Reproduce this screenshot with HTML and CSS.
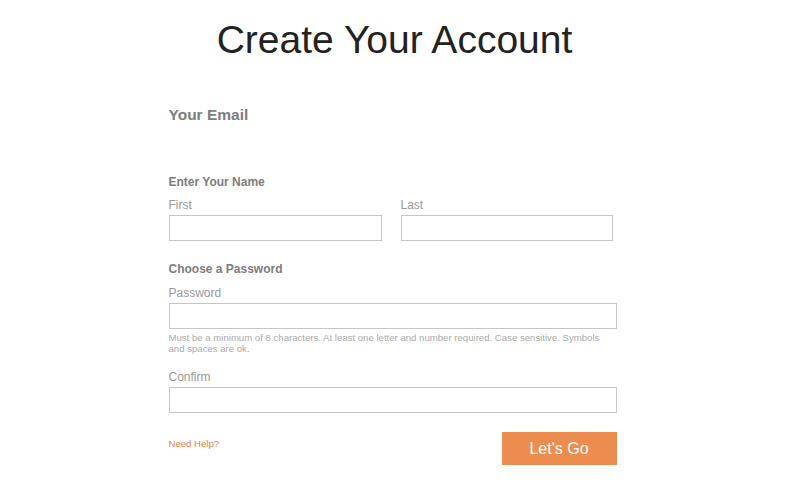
FILE: index.html
```html
<!DOCTYPE html>
<html lang="en">
<head>
  <meta charset="UTF-8" />
  <meta name="viewport" content="width=device-width, initial-scale=1.0" />
  <title>Create Your Account</title>
  <link rel="stylesheet" href="styles.css">
</head>
<body>

  <h1 class="page-title">Create Your Account</h1>

  <form class="signup-form" onsubmit="return false;">
    <div class="section-title">Your Email</div>

    <div class="group-title">Enter Your Name</div>
    <div class="name-row">
      <div class="field">
        <label class="field-label" for="first">First</label>
        <input class="text-input" type="text" id="first">
      </div>
      <div class="field">
        <label class="field-label" for="last">Last</label>
        <input class="text-input" type="text" id="last">
      </div>
    </div>

    <div class="group-title group-password">Choose a Password</div>
    <div class="field">
      <label class="field-label" for="password">Password</label>
      <input class="text-input" type="password" id="password">
      <p class="hint">Must be a minimum of 8 characters. At least one letter and number required. Case sensitive. Symbols and spaces are ok.</p>
    </div>

    <div class="field">
      <label class="field-label" for="confirm">Confirm</label>
      <input class="text-input" type="password" id="confirm">
    </div>

    <div class="form-footer">
      <a class="help-link" href="#">Need Help?</a>
      <button class="submit-btn" type="submit">Let's Go</button>
    </div>
  </form>

</body>
</html>
```

FILE: styles.css
```css
body {
  margin: 0;
  font-family: "Liberation Sans", Arial, sans-serif;
  background: #fff;
}

.page-title {
  margin: 18px 0 0;
  font-size: 39px;
  line-height: 44px;
  font-weight: normal;
  color: #222;
  text-align: center;
}

.signup-form {
  width: 448px;
  margin: 0 auto;
  position: relative;
  left: -2px;
}

.section-title {
  margin-top: 43px;
  font-size: 15.5px;
  line-height: 20px;
  font-weight: bold;
  color: #7d7d7d;
}

.group-title {
  margin-top: 50px;
  font-size: 12px;
  line-height: 15px;
  font-weight: bold;
  color: #7d7d7d;
}

.group-password {
  margin-top: 21px;
}

.name-row {
  display: grid;
  grid-template-columns: 213px 212px;
  column-gap: 19px;
}

.field {
  display: flex;
  flex-direction: column;
}

.field-label {
  margin-top: 8px;
  margin-bottom: 2px;
  font-size: 12px;
  line-height: 15px;
  color: #999;
}

.group-password + .field .field-label {
  margin-top: 9px;
}

.text-input {
  box-sizing: border-box;
  width: 100%;
  height: 26px;
  margin: 0;
  border: 1px solid #c6c6c6;
  background: #fff;
  outline: none;
  font: inherit;
}

.hint {
  margin: 3px 0 8px;
  font-size: 9.6px;
  line-height: 11px;
  color: #ababab;
}

.form-footer {
  display: flex;
  justify-content: space-between;
  align-items: flex-start;
  margin-top: 19px;
}

.help-link {
  margin-top: 6px;
  font-size: 9.6px;
  line-height: 12px;
  color: #e07f44;
  text-decoration: none;
}

.submit-btn {
  width: 115px;
  height: 33px;
  padding: 0;
  border: none;
  background: #ec8d4f;
  color: #fff;
  font-family: inherit;
  font-size: 16px;
  line-height: 33px;
  cursor: pointer;
}
```
